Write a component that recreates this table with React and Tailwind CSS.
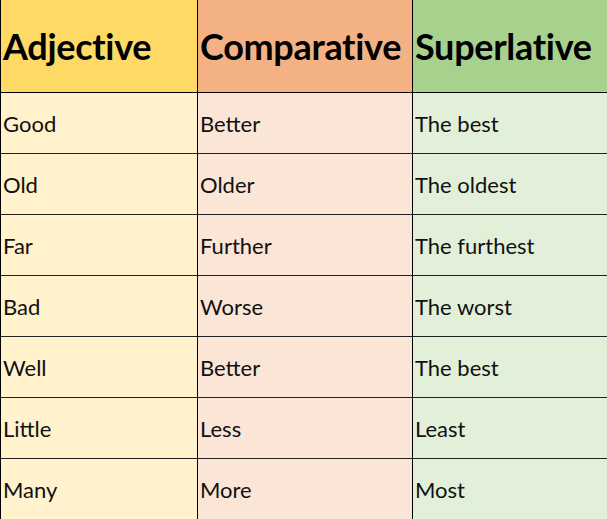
import React from "react";

const rows = [
  ["Good", "Better", "The best"],
  ["Old", "Older", "The oldest"],
  ["Far", "Further", "The furthest"],
  ["Bad", "Worse", "The worst"],
  ["Well", "Better", "The best"],
  ["Little", "Less", "Least"],
  ["Many", "More", "Most"],
];

const headBg = ["bg-[#ffd966]", "bg-[#f4b183]", "bg-[#a9d18e]"];
const bodyBg = ["bg-[#fff2cc]", "bg-[#fbe5d6]", "bg-[#e2f0d9]"];
const heads = ["Adjective", "Comparative", "Superlative"];

export default function App() {
  return (
    <div className="w-[607px] h-[519px] overflow-hidden bg-white">
      <div className="grid grid-cols-[197px_215px_195px] border-l border-black">
        {heads.map((h, i) => (
          <div
            key={h}
            className={`${headBg[i]} h-[93px] border-b border-black ${i < 2 ? "border-r" : ""} flex items-center pl-[2px] text-[36px] font-bold text-black tracking-[-0.3px] font-['Lato',sans-serif]`}
          >
            {h}
          </div>
        ))}
        {rows.map((r, ri) =>
          r.map((c, ci) => (
            <div
              key={ri + "-" + ci}
              className={`${bodyBg[ci]} h-[61px] border-b border-[#222] ${ci < 2 ? "border-r border-r-black" : ""} flex items-center pl-[2px] text-[22px] text-[#111] font-['Lato',sans-serif]`}
            >
              {c}
            </div>
          ))
        )}
      </div>
    </div>
  );
}
